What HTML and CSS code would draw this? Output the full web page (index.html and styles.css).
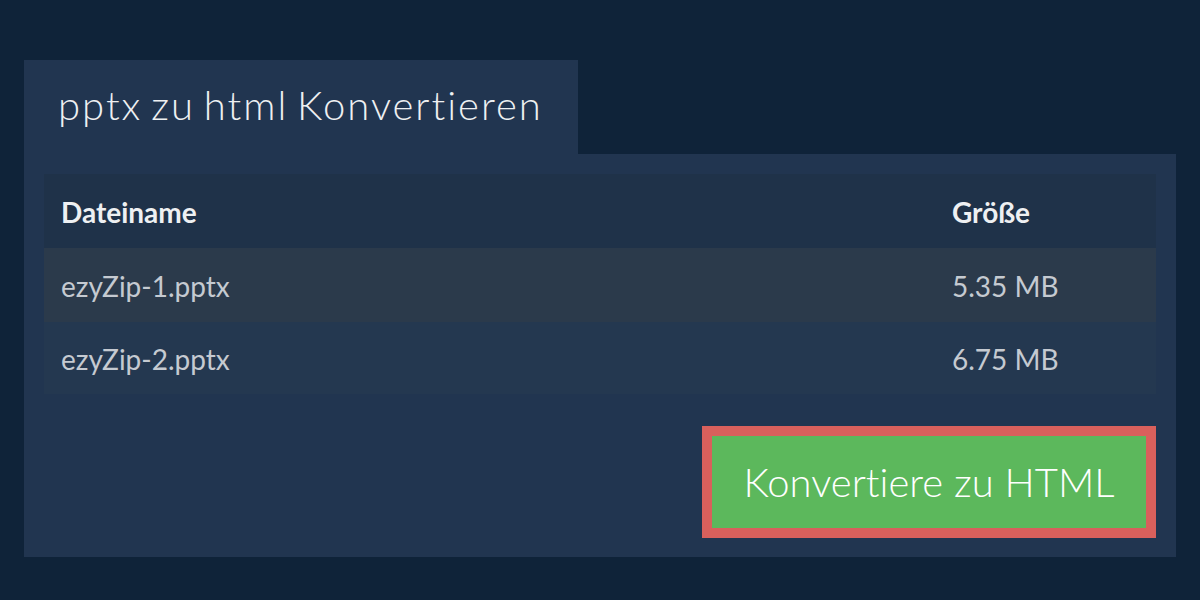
FILE: index.html
```html
<!DOCTYPE html>
<html lang="de">
<head>
<meta charset="utf-8">
<title>pptx zu html Konvertieren</title>
<link rel="stylesheet" href="styles.css">
</head>
<body>
<div class="wrap">
  <div class="tab"><h1 class="title">pptx zu html Konvertieren</h1></div>
  <div class="panel">
    <div class="table">
      <div class="row head"><div class="cell">Dateiname</div><div class="cell">Größe</div></div>
      <div class="row odd"><div class="cell">ezyZip-1.pptx</div><div class="cell">5.35 MB</div></div>
      <div class="row even"><div class="cell">ezyZip-2.pptx</div><div class="cell">6.75 MB</div></div>
    </div>
    <div class="actions">
      <button class="convert">Konvertiere zu HTML</button>
    </div>
  </div>
</div>
</body>
</html>
```

FILE: styles.css
```css
html, body {
  margin: 0;
  padding: 0;
  background: #0f2339;
  font-family: Lato, "Open Sans", sans-serif;
  font-variant-ligatures: none;
}
.wrap {
  padding: 60px 24px 0 24px;
}
.tab {
  width: 554px;
  height: 94px;
  background: #213550;
  box-sizing: border-box;
  padding-left: 34px;
  display: flex;
  align-items: center;
}
.title {
  margin: 0;
  font-weight: 300;
  font-size: 40px;
  letter-spacing: 2px;
  word-spacing: -4px;
  color: #eef0f2;
  line-height: 1;
  padding-bottom: 4px;
}
.panel {
  background: #213550;
  padding: 20px 20px 19px 20px;
  height: 403px;
  box-sizing: border-box;
}
.table {
  display: flex;
  flex-direction: column;
}
.row {
  display: grid;
  grid-template-columns: 1fr 221px;
  align-items: center;
  height: 74px;
}
.row .cell {
  padding-left: 17px;
  font-size: 28px;
  padding-top: 2px;
}
.head {
  background: #1f3249;
  color: #eef0f2;
  font-weight: 700;
}
.odd {
  background: #2b3a4b;
  color: #c5cad1;
}
.even {
  background: #243850;
  color: #c5cad1;
  height: 72px;
}
.actions {
  display: flex;
  justify-content: flex-end;
  margin-top: 32px;
}
.convert {
  width: 454px;
  height: 112px;
  box-sizing: border-box;
  border: 10px solid #d9605c;
  background: #5cb85c;
  color: #ffffff;
  font-family: Lato, "Open Sans", sans-serif;
  font-variant-ligatures: none;
  font-weight: 300;
  font-size: 40px;
  padding: 0;
  margin: 0;
}
```
